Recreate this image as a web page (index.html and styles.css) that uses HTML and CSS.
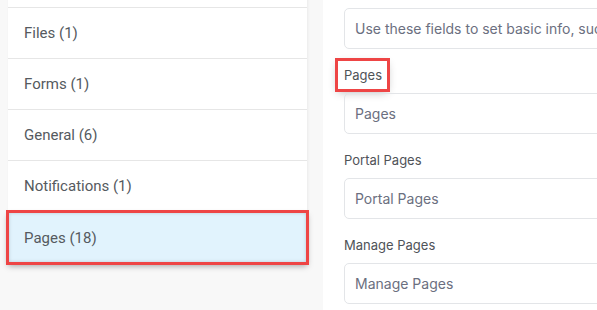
FILE: index.html
```html
<!DOCTYPE html>
<html lang="en">
<head>
    <meta charset="UTF-8">
    <meta name="viewport" content="width=device-width, initial-scale=1.0">
    <title>Settings</title>
    <link rel="stylesheet" href="styles.css">
</head>
<body>

    <div class="layout">
        <aside class="sidebar">
            <ul class="group-list">
                <li class="group"></li>
                <li class="group">Files (1)</li>
                <li class="group">Forms (1)</li>
                <li class="group">General (6)</li>
                <li class="group">Notifications (1)</li>
                <li class="group active">Pages (18)</li>
            </ul>
        </aside>

        <!-- Group fields -->
        <main class="fields">
            <div class="field">
                <div class="input">Use these fields to set basic info, such as</div>
            </div>
            <div class="field">
                <label class="label marked">Pages</label>
                <div class="input">Pages</div>
            </div>
            <div class="field">
                <label class="label">Portal Pages</label>
                <div class="input">Portal Pages</div>
            </div>
            <div class="field">
                <label class="label">Manage Pages</label>
                <div class="input">Manage Pages</div>
            </div>
        </main>
    </div>

</body>
</html>
```

FILE: styles.css
```css
/* Reset default styles */
* {
    margin: 0;
    padding: 0;
    box-sizing: border-box;
}

html, body {
    height: 100%;
    overflow: hidden;
}

body {
    background-color: #f8f8f8;
    font-family: Roboto, "Liberation Sans", sans-serif;
}

.layout {
    display: flex;
    gap: 16px;
    padding-left: 8px;
}

/* Sidebar */
.sidebar {
    width: 299px;
    flex-shrink: 0;
}

.group-list {
    list-style-type: none;
    background-color: white;
    box-shadow: 1px 0 3px rgba(0, 0, 0, 0.06);
    margin-top: -43px;
}

.group {
    height: 51px;
    padding: 0 16px;
    display: flex;
    align-items: center;
    font-size: 15px;
    color: #555a60;
    border-bottom: 1px solid #e6e6e6;
}

.group.active {
    position: relative;
    background-color: #e1f3fd;
    border-bottom: none;
    outline: 3.5px solid #ee4545;
    outline-offset: -1px;
    box-shadow: 0 3px 6px rgba(0, 0, 0, 0.35), inset 0 0 4px rgba(0, 0, 0, 0.25);
}

/* Fields */
.fields {
    flex: 1;
    background-color: white;
    min-height: 310px;
    padding: 8px 0 0 21px;
    font-family: Inter, "Noto Sans", sans-serif;
    min-width: 400px;
}

.field {
    display: flex;
    flex-direction: column;
}

.field + .field {
    margin-top: 17px;
}

.label {
    font-size: 13px;
    color: #4f5358;
    line-height: 18px;
    margin-bottom: 9px;
    align-self: flex-start;
}

.label.marked {
    outline: 3.5px solid #ee4545;
    outline-offset: 5px;
    box-shadow: 0 0 0 5px white, 0 3px 10px 5px rgba(0, 0, 0, 0.3);
    margin-left: -1px;
    padding-left: 1px;
}

.input {
    height: 41px;
    border: 1px solid #e3e5e8;
    border-radius: 5px;
    padding: 0 10px;
    display: flex;
    align-items: center;
    font-size: 14px;
    color: #6b6f80;
    white-space: nowrap;
    overflow: hidden;
    width: 400px;
}
```
